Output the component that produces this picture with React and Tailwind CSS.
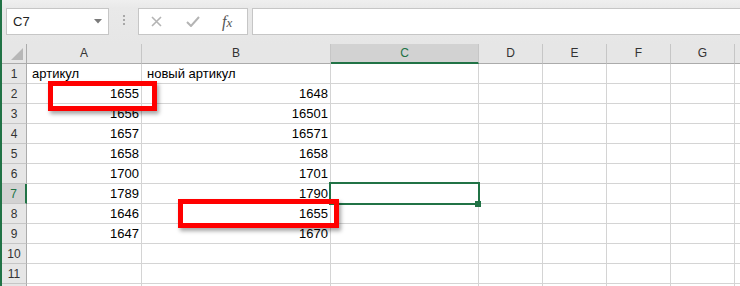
import React from "react";

const font = { fontFamily: '"Liberation Sans", Arial, sans-serif' };

const colsMain = [
  { key: "A", w: "w-[115px]" },
  { key: "B", w: "w-[189px]" },
  { key: "C", w: "w-[148px]" },
  { key: "D", w: "w-[64px]" },
  { key: "E", w: "w-[64px]" },
  { key: "F", w: "w-[64px]" },
  { key: "G", w: "w-[64px]" },
];

const rows = [
  { a: "артикул", b: "новый артикул", text: true },
  { a: "1655", b: "1648" },
  { a: "1656", b: "16501" },
  { a: "1657", b: "16571" },
  { a: "1658", b: "1658" },
  { a: "1700", b: "1701" },
  { a: "1789", b: "1790" },
  { a: "1646", b: "1655" },
  { a: "1647", b: "1670" },
  { a: "", b: "" },
  { a: "", b: "" },
  { a: "", b: "", hideNum: true },
];

function Cell({ w, value, left }) {
  return (
    <div
      className={`${w} shrink-0 h-[20px] border-r border-b border-[#d4d4d4] bg-white text-[13px] leading-[19px] text-black overflow-visible whitespace-nowrap ${
        left ? "pl-[5px] text-left" : "pr-[2px] text-right"
      }`}
    >
      {value}
    </div>
  );
}

export default function App() {
  return (
    <div className="relative w-[740px] h-[286px] overflow-hidden flex bg-[#e6e6e6]" style={font}>
      <div className="w-[2px] shrink-0 bg-[#217346]" />
      <div className="flex-1 flex flex-col min-w-0">
        {/* Formula bar */}
        <div className="h-[44px] shrink-0 flex items-start pt-[8px] bg-[linear-gradient(#efefef_0px,#e9e9e9_8px,#e6e6e6_100%)]">
          <div className="ml-[4px] w-[103px] h-[27px] border border-[#c6c6c6] bg-white flex items-center justify-between pl-[6px] pr-[6px]">
            <span className="text-[13px] text-[#222]">C7</span>
            <svg width="8" height="5" viewBox="0 0 8 5">
              <path d="M0 0 L8 0 L4 4.5 Z" fill="#7a7a7a" />
            </svg>
          </div>
          <div className="ml-[14px] mt-[7px] flex flex-col gap-[2px]">
            <div className="w-[2px] h-[2px] bg-[#a8a8a8]" />
            <div className="w-[2px] h-[2px] bg-[#a8a8a8]" />
            <div className="w-[2px] h-[2px] bg-[#a8a8a8]" />
          </div>
          <div className="ml-[13px] w-[110px] h-[27px] border border-[#c6c6c6] bg-white flex items-center">
            <svg className="ml-[12px]" width="11" height="11" viewBox="0 0 11 11">
              <path d="M1 1 L10 10 M10 1 L1 10" stroke="#b4b4b4" strokeWidth="1.6" />
            </svg>
            <svg className="ml-[24px]" width="14" height="11" viewBox="0 0 14 11">
              <path d="M1 6 L5 10 L13 1" stroke="#b4b4b4" strokeWidth="2" fill="none" />
            </svg>
            <span
              className="ml-[22px] text-[16px] italic text-[#555] leading-none"
              style={{ fontFamily: '"Liberation Serif", "Times New Roman", serif' }}
            >
              f<span className="text-[13px]">x</span>
            </span>
          </div>
          <div className="ml-[4px] flex-1 h-[27px] border-t border-b border-l border-[#c6c6c6] bg-white" />
        </div>

        {/* Column headers */}
        <div className="h-[20px] shrink-0 flex">
          <div className="w-[25px] shrink-0 h-[20px] border-r border-b border-[#ababab] bg-[#e6e6e6] relative">
            <svg className="absolute left-[9px] top-[4px]" width="13" height="13" viewBox="0 0 13 13">
              <path d="M12 0 L12 12 L0 12 Z" fill="#b7b7b7" />
            </svg>
          </div>
          {colsMain.map((c) => {
            const sel = c.key === "C";
            return (
              <div
                key={c.key}
                className={`${c.w} shrink-0 h-[20px] border-r border-[#c6c6c6] text-center text-[12px] leading-[19px] ${
                  sel
                    ? "bg-[#d2d2d2] border-b-2 border-b-[#217346] text-[#217346]"
                    : "bg-[#e6e6e6] border-b border-b-[#ababab] text-[#333]"
                }`}
              >
                {c.key}
              </div>
            );
          })}
          <div className="flex-1 h-[20px] border-b border-[#ababab] bg-[#e6e6e6]" />
        </div>

        {/* Rows */}
        {rows.map((r, i) => {
          const n = i + 1;
          const sel = n === 7;
          return (
            <div key={n} className="h-[20px] shrink-0 flex">
              <div
                className={`w-[25px] shrink-0 h-[20px] border-b border-b-[#c6c6c6] text-center text-[12px] leading-[20px] ${
                  sel
                    ? "bg-[#d2d2d2] border-r-2 border-r-[#217346] text-[#217346]"
                    : "bg-[#e6e6e6] border-r border-r-[#ababab] text-[#333]"
                }`}
              >
                {r.hideNum ? "" : n}
              </div>
              <Cell w="w-[115px]" value={r.a} left={r.text} />
              <Cell w="w-[189px]" value={r.b} left={r.text} />
              <Cell w="w-[148px]" value="" />
              <Cell w="w-[64px]" value="" />
              <Cell w="w-[64px]" value="" />
              <Cell w="w-[64px]" value="" />
              <Cell w="w-[64px]" value="" />
              <div className="flex-1 h-[20px] border-b border-[#d4d4d4] bg-white" />
            </div>
          );
        })}
      </div>

      {/* Selection C7 */}
      <div className="absolute left-[329px] top-[182px] w-[151px] h-[23px] border-2 border-[#217346]" />
      <div className="absolute left-[475px] top-[201px] w-[6px] h-[6px] bg-[#217346]" />

      {/* Red highlight boxes */}
      <div className="absolute left-[48px] top-[81px] w-[109px] h-[30px] border-[5px] border-[#ff0000] shadow-[2px_3px_4px_rgba(0,0,0,0.35)]" />
      <div className="absolute left-[178px] top-[199px] w-[161px] h-[29px] border-[5px] border-[#ff0000] shadow-[2px_3px_4px_rgba(0,0,0,0.35)]" />
    </div>
  );
}
